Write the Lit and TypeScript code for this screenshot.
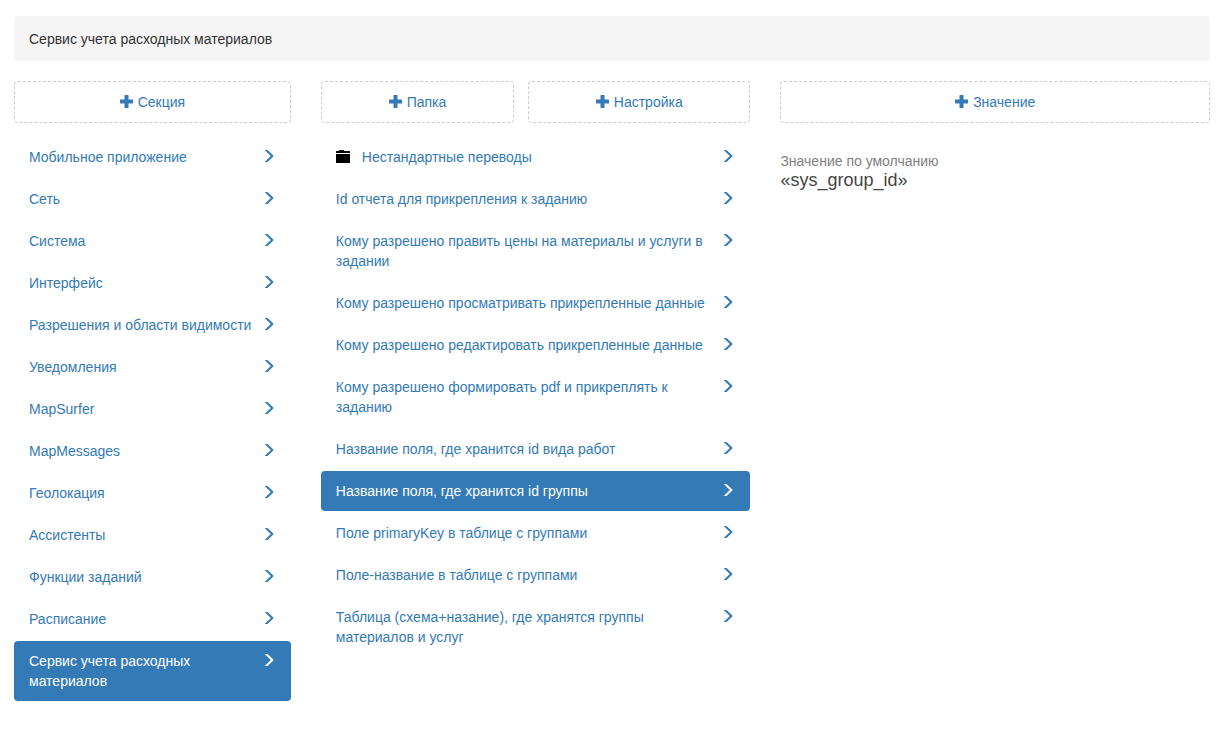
import { LitElement, html, css, svg, nothing } from "lit";
import { customElement, property, state } from "lit/decorators.js";
import { classMap } from "lit/directives/class-map.js";

interface Entry {
  title: string;
  folder?: boolean;
}

const SECTIONS: Entry[] = [
  { title: "Мобильное приложение" },
  { title: "Сеть" },
  { title: "Система" },
  { title: "Интерфейс" },
  { title: "Разрешения и области видимости" },
  { title: "Уведомления" },
  { title: "MapSurfer" },
  { title: "MapMessages" },
  { title: "Геолокация" },
  { title: "Ассистенты" },
  { title: "Функции заданий" },
  { title: "Расписание" },
  { title: "Сервис учета расходных материалов" },
];

const SETTINGS: Entry[] = [
  { title: "Нестандартные переводы", folder: true },
  { title: "Id отчета для прикрепления к заданию" },
  { title: "Кому разрешено править цены на материалы и услуги в задании" },
  { title: "Кому разрешено просматривать прикрепленные данные" },
  { title: "Кому разрешено редактировать прикрепленные данные" },
  { title: "Кому разрешено формировать pdf и прикреплять к заданию" },
  { title: "Название поля, где хранится id вида работ" },
  { title: "Название поля, где хранится id группы" },
  { title: "Поле primaryKey в таблице с группами" },
  { title: "Поле-название в таблице с группами" },
  { title: "Таблица (схема+назание), где хранятся группы материалов и услуг" },
];

const PLUS = svg`<path d="M4.900 0h3.200q.4 0 .4.400V4.500h4.100q.4 0 .4.400v3.200q0 .4-.4.400H8.500v4.100q0 .4-.4.400H4.900q-.4 0-.4-.4V8.500H.4q-.4 0-.4-.4V4.900q0-.4.400-.4h4.100V.4q0-.4.400-.4z"/>`;
const CHEVRON = svg`<path d="M2.700 0h2.400q.4 0 .7.300L11.300 5.600q.4.400 0 .8L5.800 11.700q-.3.300-.7.300H2.700L8.800 6z"/>`;
const FOLDER = svg`<path d="M3 1V.4Q3 0 3.400 0h4.200Q8 0 8 .4V1h5.600q.4 0 .4.400V3H0V1.400Q0 1 .4 1zM0 4h14v9H0z"/>`;

@customElement("nav-list")
export class NavList extends LitElement {
  static styles = css`
    :host {
      display: block;
    }
    .list {
      display: flex;
      flex-direction: column;
      gap: 2px;
      margin: 0;
      padding: 0;
      list-style: none;
    }
    .item {
      display: flex;
      padding: 10px 15px;
      border-radius: 4px;
      color: #337ab7;
      text-decoration: none;
    }
    .item:hover {
      background: #eee;
    }
    .item.active {
      background: #337ab7;
      color: #fff;
    }
    .title {
      flex: 1;
      min-width: 0;
    }
    .icon {
      flex: none;
      width: 14px;
      height: 14px;
      margin-top: 3px;
      fill: currentColor;
    }
    .folder {
      margin-right: 12px;
      color: #000;
    }
  `;

  @property({ attribute: false }) entries: Entry[] = [];
  @property({ type: Number }) selected = -1;

  private choose(event: Event, index: number) {
    event.preventDefault();
    this.selected = index;
  }

  render() {
    return html`<ul class="list">
      ${this.entries.map(
        (entry, i) => html`<li>
          <a
            href="#"
            class=${classMap({ item: true, active: i === this.selected })}
            aria-current=${i === this.selected ? "true" : nothing}
            @click=${(e: Event) => this.choose(e, i)}
          >
            ${entry.folder
              ? html`<svg class="icon folder" viewBox="0 0 14 14" aria-hidden="true">${FOLDER}</svg>`
              : nothing}
            <span class="title">${entry.title}</span>
            <svg class="icon" viewBox="0 0 14 14" aria-hidden="true">${CHEVRON}</svg>
          </a>
        </li>`
      )}
    </ul>`;
  }
}

@customElement("app-root")
export class AppRoot extends LitElement {
  static styles = css`
    :host {
      display: block;
      box-sizing: border-box;
      padding: 16px 15px 28px 14px;
      background: #fff;
      color: #333;
      font: 14px/20px "Liberation Sans", Arial, sans-serif;
    }
    .crumbs {
      margin-bottom: 20px;
      padding: 13px 15px 12px;
      border-radius: 4px;
      background: #f5f5f5;
    }
    .columns {
      display: grid;
      grid-template-columns: 29fr 45fr 45fr;
      gap: 30px;
      align-items: start;
    }
    .actions {
      display: flex;
      gap: 14px;
      margin-bottom: 14px;
    }
    .add {
      display: flex;
      flex: 1;
      align-items: center;
      justify-content: center;
      gap: 4px;
      padding: 10px 12px;
      border: 1px dashed #ccc;
      border-radius: 4px;
      background: none;
      color: #337ab7;
      font: inherit;
      cursor: pointer;
    }
    .narrow {
      flex: 0 0 45%;
      box-sizing: border-box;
    }
    .plus {
      width: 14px;
      height: 14px;
      fill: currentColor;
    }
    .value {
      margin: 0;
      padding-top: 14px;
    }
    .label {
      color: #808080;
    }
    .text {
      margin: 0;
      color: #444;
      font-size: 18px;
      line-height: 18px;
    }
  `;

  @state() private section = SECTIONS.length - 1;
  @state() private setting = 7;

  private addButton(label: string, narrow = false) {
    return html`<button type="button" class=${classMap({ add: true, narrow })}>
      <svg class="plus" viewBox="0 0 14 14" aria-hidden="true">${PLUS}</svg>
      <span>${label}</span>
    </button>`;
  }

  render() {
    return html`
      <header class="crumbs">${SECTIONS[this.section].title}</header>
      <main class="columns">
        <section>
          <div class="actions">${this.addButton("Секция")}</div>
          <nav-list .entries=${SECTIONS} .selected=${this.section}></nav-list>
        </section>
        <section>
          <div class="actions">
            ${this.addButton("Папка", true)} ${this.addButton("Настройка")}
          </div>
          <nav-list .entries=${SETTINGS} .selected=${this.setting}></nav-list>
        </section>
        <section>
          <div class="actions">${this.addButton("Значение")}</div>
          <dl class="value">
            <dt class="label">Значение по умолчанию</dt>
            <dd class="text">«sys_group_id»</dd>
          </dl>
        </section>
      </main>
    `;
  }
}
